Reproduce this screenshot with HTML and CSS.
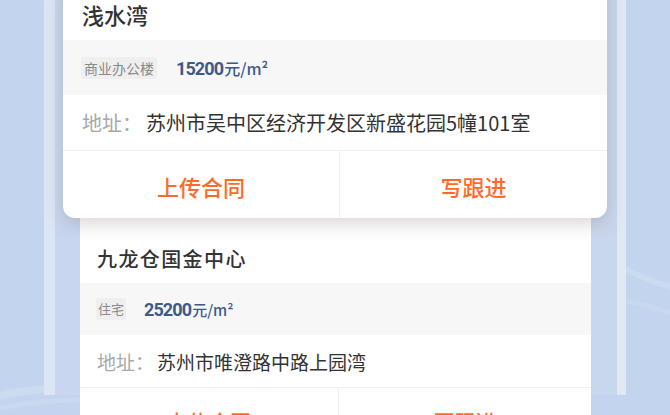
FILE: index.html
```html
<!DOCTYPE html>
<html lang="zh-CN">
<head>
<meta charset="utf-8">
<title>房源卡片</title>
<link rel="stylesheet" href="styles.css">
</head>
<body>
<svg class="waves" width="670" height="415" viewBox="0 0 670 415" aria-hidden="true">
  <path d="M-20 400 C 60 380, 130 385, 200 405" fill="none" stroke="#ffffff" stroke-opacity="0.16" stroke-width="8"/>
  <path d="M-20 412 C 70 392, 140 398, 220 418" fill="none" stroke="#ffffff" stroke-opacity="0.12" stroke-width="5"/>
  <path d="M610 262 C 630 270, 650 285, 690 290" fill="none" stroke="#ffffff" stroke-opacity="0.14" stroke-width="6"/>
  <path d="M610 300 C 640 300, 660 312, 690 318" fill="none" stroke="#ffffff" stroke-opacity="0.1" stroke-width="5"/>
</svg>
<div class="frame">
  <div class="stack">
    <section class="card card-front">
      <div class="title-row">浅水湾</div>
      <div class="info-row">
        <span class="tag">商业办公楼</span>
        <span class="price"><b>15200</b>元/m²</span>
      </div>
      <div class="addr-row">
        <span class="addr-label">地址：</span>
        <span class="addr-text">苏州市吴中区经济开发区新盛花园5幢101室</span>
      </div>
      <div class="actions">
        <div class="action">上传合同</div>
        <div class="action">写跟进</div>
      </div>
    </section>
    <section class="card card-back">
      <div class="title-row">九龙仓国金中心</div>
      <div class="info-row">
        <span class="tag">住宅</span>
        <span class="price"><b>25200</b>元/m²</span>
      </div>
      <div class="addr-row">
        <span class="addr-label">地址：</span>
        <span class="addr-text">苏州市唯澄路中路上园湾</span>
      </div>
      <div class="actions">
        <div class="action">上传合同</div>
        <div class="action">写跟进</div>
      </div>
    </section>
  </div>
</div>
</body>
</html>
```
FILE: styles.css
```css
html, body {
  margin: 0;
  padding: 0;
}
body {
  width: 670px;
  height: 415px;
  overflow: hidden;
  position: relative;
  background: #c2d4ee;
  font-family: "Noto Sans CJK SC", "Noto Sans", sans-serif;
  color: #333;
}
.waves {
  position: absolute;
  left: 0;
  top: 0;
  z-index: 0;
}
.frame {
  position: relative;
  z-index: 1;
  margin-left: 44px;
  width: 582px;
  height: 415px;
  box-sizing: border-box;
  border-left: 11px solid #dce5f4;
  border-right: 9px solid #e0e8f4;
  background: linear-gradient(90deg, #c8d7ef 0%, #cddbf0 50%, #c8d7ee 100%);
}
.stack {
  padding: 0 10px 0 8px;
}
.card {
  background: #fff;
  border-radius: 12px;
  overflow: hidden;
}
.card-front {
  position: relative;
  z-index: 2;
  margin-top: -20px;
  box-shadow: 0 6px 18px rgba(100, 70, 60, 0.22);
}
.card-back {
  position: relative;
  z-index: 1;
  margin: -18px 16px 0 17px;
}
.title-row {
  font-size: 22px;
  line-height: 30px;
  font-weight: 500;
  padding: 19px 19px 11px;
  color: #333;
}
.card-back .title-row {
  font-size: 20px;
  letter-spacing: 1.4px;
  line-height: 28px;
  padding: 45px 17px 10px;
}
.info-row {
  display: flex;
  align-items: center;
  gap: 19px;
  height: 55px;
  padding-left: 18px;
  background: #f7f7f7;
}
.card-back .info-row {
  height: 52px;
  padding-left: 16px;
  gap: 18px;
}
.tag {
  font-size: 14px;
  line-height: 20px;
  padding: 1px 3px;
  color: #8a8a8a;
  background: #efefef;
  border-radius: 2px;
}
.card-back .tag {
  font-size: 13px;
  padding: 1px 2px;
}
.price {
  color: #3d5a8b;
  font-size: 16px;
  font-weight: 500;
  white-space: nowrap;
}
.price b {
  font-family: "Roboto", "Liberation Sans", sans-serif;
  font-weight: 700;
  font-size: 18px;
  letter-spacing: -0.9px;
  margin-right: 1px;
}
.card-back .price {
  font-size: 15px;
}
.card-back .price b {
  font-size: 18px;
}
.addr-row {
  display: flex;
  align-items: center;
  height: 55px;
  padding-left: 19px;
  font-size: 20px;
  border-bottom: 1px solid #f0f0f0;
}
.card-back .addr-row {
  height: 52px;
  padding-left: 17px;
  font-size: 19px;
}
.addr-label {
  width: 64px;
  flex: none;
  color: #a8a8a8;
}
.card-back .addr-label {
  width: 60px;
}
.addr-text {
  color: #333;
  white-space: nowrap;
}
.actions {
  display: grid;
  grid-template-columns: 276px 1fr;
  height: 67px;
}
.card-back .actions {
  grid-template-columns: 258px 1fr;
  height: 64px;
}
.action {
  display: flex;
  align-items: center;
  justify-content: center;
  padding-top: 3px;
  font-size: 22px;
  font-weight: 500;
  color: #ff6a2b;
}
.card-back .action {
  font-size: 21px;
  padding-top: 2px;
}
.action + .action {
  border-left: 1px solid #f0f0f0;
}
```
